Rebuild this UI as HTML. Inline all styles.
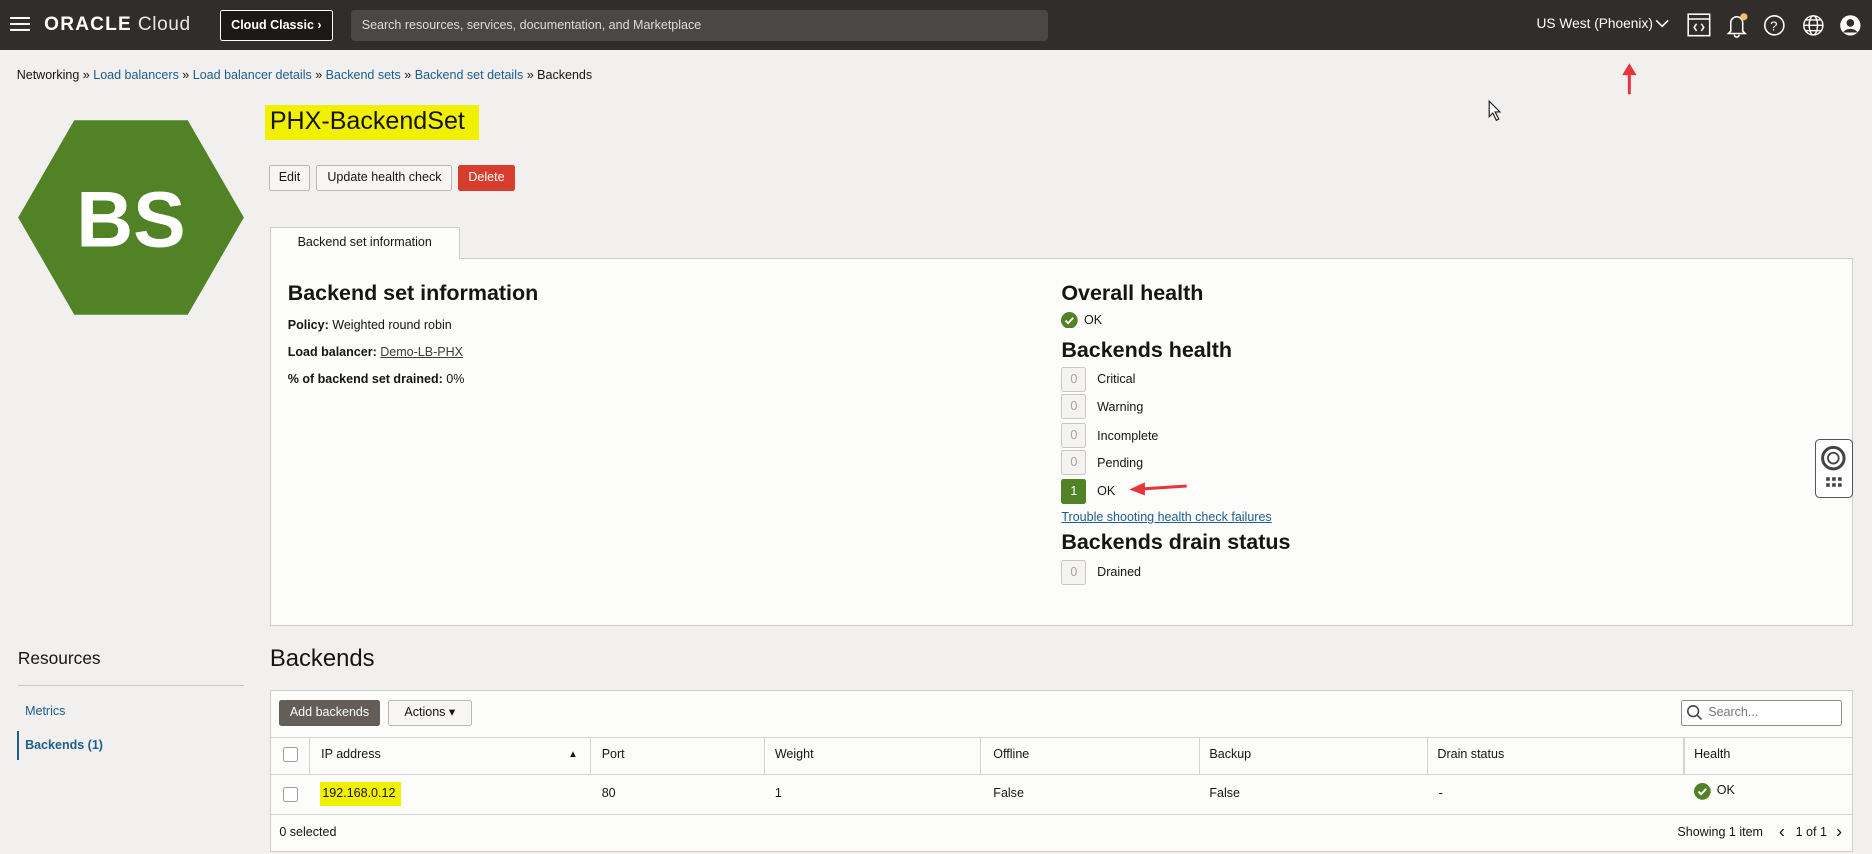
<!DOCTYPE html>
<html><head><meta charset="utf-8">
<style>
html,body{margin:0;padding:0;width:1872px;height:854px;overflow:hidden;background:#f1f0ee;}
#w{zoom:1.19388;width:1568px;height:716px;position:relative;font-family:"Liberation Sans",Arial,sans-serif;color:#161513;font-size:10.5px;}
.a{position:absolute;white-space:nowrap;}
.hdr{left:0;top:0;width:1568px;height:42px;background:#312d2a;}
.btn{position:absolute;box-sizing:border-box;border:1px solid #bcb8b4;background:#f7f6f5;border-radius:2px;font-size:10.5px;text-align:center;line-height:20px;color:#161513;}
a,.lk{color:#1f5d8a;}
.box{position:absolute;left:889px;width:21px;height:21px;box-sizing:border-box;border:1px solid #c9c7c4;background:#f4f3f2;color:#a8a6a3;text-align:center;line-height:19px;font-size:10.5px;border-radius:2px;}
.lbl{position:absolute;left:919px;font-size:10.5px;}
h2{position:absolute;margin:0;font-size:18px;font-weight:bold;white-space:nowrap;}
.th{position:absolute;top:618px;height:30px;line-height:28px;font-size:10.5px;}
.td{position:absolute;top:648px;height:34px;line-height:32px;font-size:10.5px;}
.vl{position:absolute;top:618px;height:30px;width:1px;background:#d6d4d1;}
.cb{position:absolute;left:237px;width:11px;height:11px;border:1px solid #9e9a96;border-radius:2px;background:#fff;}
</style></head><body><div id="w">
<div class="a hdr"></div>
<div class="a" style="left:8px;top:14px;width:17px;height:2px;background:#fff;box-shadow:0 5px 0 #fff,0 10px 0 #fff;"></div>
<div class="a" style="left:37px;top:12px;color:#fff;font-size:16px;letter-spacing:0.5px;"><span style="font-weight:bold;letter-spacing:1px">ORACLE</span> <span style="font-weight:normal;color:#e8e6e3">Cloud</span></div>
<div class="a" style="left:184px;top:8px;width:95px;height:26px;box-sizing:border-box;border:1px solid #fff;background:#1c1a18;color:#fff;font-size:10.5px;font-weight:bold;line-height:24px;text-align:center;border-radius:2px;">Cloud Classic &#x203A;</div>
<div class="a" style="left:294px;top:8px;width:584px;height:26px;background:#4b4744;border-radius:3px;color:#ddd;font-size:10.5px;line-height:26px;padding-left:9px;box-sizing:border-box;">Search resources, services, documentation, and Marketplace</div>
<div class="a" style="left:1287px;top:13px;color:#fff;font-size:11.5px;">US West (Phoenix)</div>
<svg class="a" style="left:1386px;top:15px" width="12" height="10"><path d="M1 2l5 5 5-5" stroke="#fff" fill="none" stroke-width="1.3"/></svg>
<svg class="a" style="left:1413px;top:11px" width="20" height="20" fill="none" stroke="#fff" stroke-width="1.3"><rect x="1" y="1" width="18" height="18"/><path d="M1 5h18M8 9l-2 3 2 3M12 9l2 3-2 3"/></svg>
<svg class="a" style="left:1446px;top:10px" width="20" height="22" fill="none" stroke="#fff" stroke-width="1.3"><path d="M4 16V9a5 5 0 0 1 10 0v7l2 2H2zM7 19a2 2 0 0 0 4 0"/><circle cx="15" cy="4" r="3" fill="#f0c060" stroke="none"/></svg>
<svg class="a" style="left:1477px;top:12px" width="19" height="19" fill="none" stroke="#fff" stroke-width="1.3"><circle cx="9.5" cy="9.5" r="8"/><text x="6" y="14" fill="#fff" stroke="none" font-size="11" font-family="Liberation Sans">?</text></svg>
<svg class="a" style="left:1509px;top:12px" width="19" height="19" fill="none" stroke="#fff" stroke-width="1.2"><circle cx="9.5" cy="9.5" r="8"/><ellipse cx="9.5" cy="9.5" rx="3.5" ry="8"/><path d="M1.5 9.5h16M3 5h13M3 14h13"/></svg>
<svg class="a" style="left:1540px;top:12px" width="19" height="19"><circle cx="9.5" cy="9.5" r="8.5" fill="#fff"/><circle cx="9.5" cy="7.5" r="3.2" fill="#312d2a"/><path d="M3.5 15.5a6.5 5 0 0 1 12 0" fill="#312d2a"/></svg>
<svg class="a" style="left:1358px;top:52px" width="14" height="28"><path d="M7 27V8" stroke="#e8343a" stroke-width="2.5"/><path d="M1 11L7 1l6 10z" fill="#e8343a"/></svg>
<div class="a" style="left:14px;top:57px;">Networking &raquo; <span class="lk">Load balancers</span> &raquo; <span class="lk">Load balancer details</span> &raquo; <span class="lk">Backend sets</span> &raquo; <span class="lk">Backend set details</span> &raquo; Backends</div>
<svg class="a" style="left:14px;top:100px" width="191" height="165"><polygon points="48,1 143,1 190,82.5 143,164 48,164 1,82.5" fill="#518226"/><text x="95.5" y="107" text-anchor="middle" fill="#fff" font-size="66" font-weight="bold" font-family="Liberation Sans">BS</text></svg>
<div class="a" style="left:222px;top:88px;width:179px;height:29px;background:#f0f000;"></div>
<div class="a" style="left:226px;top:90px;font-size:21px;">PHX-BackendSet</div>
<div class="btn" style="left:225px;top:138px;width:35px;height:22px;">Edit</div>
<div class="btn" style="left:265px;top:138px;width:114px;height:22px;">Update health check</div>
<div class="btn" style="left:384px;top:138px;width:47px;height:22px;background:#d73d2c;border-color:#d73d2c;color:#fff;">Delete</div>
<div class="a" style="left:226px;top:216px;width:1326px;height:308px;background:#fcfcfb;border:1px solid #cfcdca;box-sizing:border-box;"></div>
<div class="a" style="left:226px;top:190px;width:159px;height:27px;background:#fcfcfb;border:1px solid #cfcdca;border-bottom:none;box-sizing:border-box;text-align:center;line-height:25px;font-size:10.5px;">Backend set information</div>
<h2 style="left:241px;top:235px;">Backend set information</h2>
<div class="a" style="left:241px;top:266px;"><b>Policy:</b> Weighted round robin</div>
<div class="a" style="left:241px;top:289px;"><b>Load balancer:</b> <span style="text-decoration:underline;color:#3d3b39">Demo-LB-PHX</span></div>
<div class="a" style="left:241px;top:312px;"><b>% of backend set drained:</b> 0%</div>
<h2 style="left:889px;top:235px;">Overall health</h2>
<svg class="a" style="left:889px;top:261px" width="14" height="14"><circle cx="7" cy="7" r="7" fill="#518226"/><path d="M3.8 7.2l2.2 2.2 4.2-4.6" stroke="#fff" stroke-width="1.6" fill="none"/></svg>
<div class="a" style="left:908px;top:262px;">OK</div>
<h2 style="left:889px;top:283px;">Backends health</h2>
<div class="box" style="top:307px">0</div><div class="lbl" style="top:312px">Critical</div>
<div class="box" style="top:330px">0</div><div class="lbl" style="top:335px">Warning</div>
<div class="box" style="top:354px">0</div><div class="lbl" style="top:359px">Incomplete</div>
<div class="box" style="top:377px">0</div><div class="lbl" style="top:382px">Pending</div>
<div class="box" style="top:401px;background:#518226;border-color:#518226;color:#fff;">1</div><div class="lbl" style="top:405px">OK</div>
<svg class="a" style="left:944px;top:402px" width="52" height="14"><path d="M50 5L12 7.5" stroke="#e8343a" stroke-width="2.5"/><path d="M2 8l13-6 0 11z" fill="#e8343a"/></svg>
<div class="a lk" style="left:889px;top:427px;text-decoration:underline;">Trouble shooting health check failures</div>
<h2 style="left:889px;top:444px;">Backends drain status</h2>
<div class="box" style="top:469px">0</div><div class="lbl" style="top:473px">Drained</div>
<div class="a" style="left:1520px;top:368px;width:32px;height:49px;box-sizing:border-box;border:1px solid #555;border-radius:4px;background:#fff;"></div>
<svg class="a" style="left:1524px;top:373px" width="24" height="40"><circle cx="12" cy="11" r="9" fill="none" stroke="#444" stroke-width="2.5"/><circle cx="12" cy="11" r="4.5" fill="none" stroke="#444" stroke-width="1.5"/><g fill="#444"><rect x="6" y="27" width="3" height="3"/><rect x="11" y="27" width="3" height="3"/><rect x="16" y="27" width="3" height="3"/><rect x="6" y="32" width="3" height="3"/><rect x="11" y="32" width="3" height="3"/><rect x="16" y="32" width="3" height="3"/></g></svg>
<div class="a" style="left:15px;top:543px;font-size:14.5px;">Resources</div>
<div class="a" style="left:15px;top:574px;width:189px;height:1px;background:#c9c7c4;"></div>
<div class="a lk" style="left:21px;top:590px;">Metrics</div>
<div class="a" style="left:14px;top:612px;width:2px;height:25px;background:#1f5d8a;"></div>
<div class="a lk" style="left:21px;top:618px;font-weight:bold;">Backends (1)</div>
<div class="a" style="left:226px;top:540px;font-size:20px;">Backends</div>
<div class="a" style="left:226px;top:578px;width:1326px;height:136px;background:#fcfcfb;border:1px solid #cfcdca;box-sizing:border-box;"></div>
<div class="btn" style="left:234px;top:586px;width:84px;height:22px;background:#655d57;border-color:#655d57;color:#fff;">Add backends</div>
<div class="btn" style="left:325px;top:586px;width:70px;height:22px;">Actions &#9662;</div>
<div class="a" style="left:1408px;top:586px;width:135px;height:22px;box-sizing:border-box;border:1px solid #8f8b87;background:#fff;border-radius:2px;color:#777;line-height:20px;padding-left:22px;">Search...</div>
<svg class="a" style="left:1412px;top:590px" width="14" height="14" fill="none" stroke="#444" stroke-width="1.3"><circle cx="6" cy="6" r="4.5"/><path d="M9.5 9.5l3.5 3.5"/></svg>
<div class="a" style="left:227px;top:617px;width:1324px;height:1px;background:#d6d4d1;"></div>
<div class="a" style="left:227px;top:648px;width:1324px;height:1px;background:#d6d4d1;"></div>
<div class="a" style="left:227px;top:682px;width:1324px;height:1px;background:#d6d4d1;"></div>
<div class="vl" style="left:259px"></div><div class="vl" style="left:494px"></div><div class="vl" style="left:640px"></div><div class="vl" style="left:821px"></div><div class="vl" style="left:1004px"></div><div class="vl" style="left:1195px"></div><div class="vl" style="left:1410px"></div>
<div class="cb" style="top:626px"></div><div class="cb" style="top:659px"></div>
<div class="th" style="left:269px">IP address</div><div class="a" style="left:476px;top:627px;font-size:8px;">&#9650;</div>
<div class="th" style="left:504px">Port</div><div class="th" style="left:649px">Weight</div><div class="th" style="left:832px">Offline</div><div class="th" style="left:1013px">Backup</div><div class="th" style="left:1204px">Drain status</div><div class="th" style="left:1419px">Health</div>
<div class="a" style="left:268px;top:655px;width:68px;height:20px;background:#f0f000;"></div>
<div class="td" style="left:270px">192.168.0.12</div><div class="td" style="left:504px">80</div><div class="td" style="left:649px">1</div><div class="td" style="left:832px">False</div><div class="td" style="left:1013px">False</div><div class="td" style="left:1205px">-</div>
<svg class="a" style="left:1419px;top:656px" width="14" height="14"><circle cx="7" cy="7" r="7" fill="#518226"/><path d="M3.8 7.2l2.2 2.2 4.2-4.6" stroke="#fff" stroke-width="1.6" fill="none"/></svg>
<div class="td" style="left:1438px;top:646px">OK</div>
<div class="a" style="left:234px;top:691px;">0 selected</div>
<div class="a" style="left:1405px;top:691px;">Showing 1 item</div>
<div class="a" style="left:1490px;top:688px;font-size:15px;">&#x2039;</div>
<div class="a" style="left:1504px;top:691px;">1 of 1</div>
<div class="a" style="left:1538px;top:688px;font-size:15px;">&#x203A;</div>
<svg class="a" style="left:1246px;top:84px" width="12" height="18"><path d="M1 1v13l3-3 3 6 2-1-3-6h4z" fill="#fff" stroke="#222" stroke-width="1"/></svg>
</div></body></html>
